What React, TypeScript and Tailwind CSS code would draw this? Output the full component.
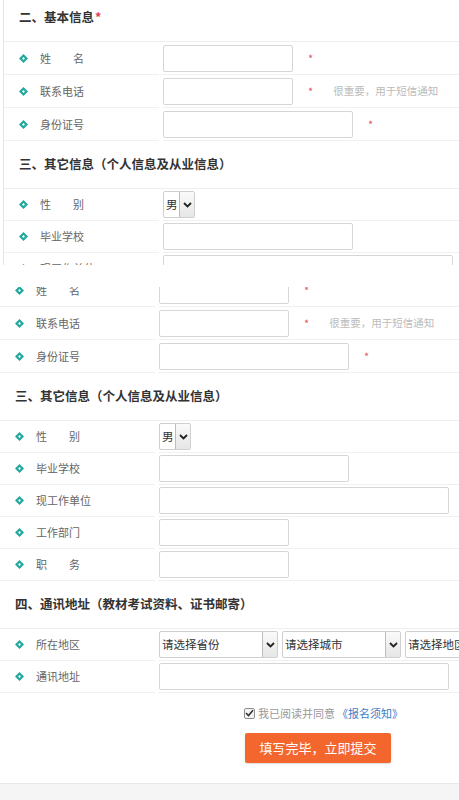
import React from "react";

const Diamond = () => (
  <svg width="9" height="9" viewBox="0 0 10 10" className="shrink-0">
    <path d="M5 0 L10 5 L5 10 L0 5 Z" fill="#22a89c" />
    <path d="M5 3.4 L6.6 5 L5 6.6 L3.4 5 Z" fill="#ffffff" />
  </svg>
);

const Chevron = () => (
  <svg width="9" height="6" viewBox="0 0 9 6">
    <path d="M1 1 L4.5 4.5 L8 1" fill="none" stroke="#222" strokeWidth="1.8" />
  </svg>
);

function Heading({ children }: { children: React.ReactNode }) {
  return (
    <div className="h-[48px] flex items-center pl-[15px] border-b border-[#efefef] text-[12.5px] font-bold text-[#333]">
      {children}
    </div>
  );
}

function Row({
  label,
  tall,
  children,
}: {
  label: string;
  tall?: boolean;
  children?: React.ReactNode;
}) {
  return (
    <div className={tall ? "flex h-[33px]" : "flex h-[32px]"}>
      <div className="w-[155px] shrink-0 flex items-center pl-[15px] border-b border-[#f0f0f0]">
        <Diamond />
        <span className="ml-[12px] text-[11px] text-[#666] whitespace-pre">{label}</span>
      </div>
      <div className="ml-[4px] flex-1 flex items-center border-b border-[#f0f0f0] whitespace-nowrap">
        {children}
      </div>
    </div>
  );
}

function Field({ w }: { w: string }) {
  return <input readOnly className={`h-[27px] ${w} shrink-0 border border-[#d6d6d6] rounded-[2px] bg-white outline-none`} />;
}

const Star = ({ ml }: { ml: string }) => (
  <span className={`${ml} text-[11px] text-[#e0566a] leading-none`}>*</span>
);

function Picker({ text, w }: { text: string; w: string }) {
  return (
    <div className={`h-[27px] ${w} shrink-0 flex items-center justify-between border border-[#cfcfcf] rounded-[2px] bg-white`}>
      <span className="pl-[2px] text-[11.5px] text-[#333]">{text}</span>
      <span className="h-full w-[15px] flex items-center justify-center border-l border-[#bdbdbd] bg-gradient-to-b from-[#fafafa] to-[#e6e6e6]">
        <Chevron />
      </span>
    </div>
  );
}

// the form as a list of blocks, so each screenshot panel can show only its slice
const blocks: React.ReactNode[] = [
  <Heading key="h2">
    二、基本信息<span className="text-[#e0405a] ml-[1px]">*</span>
  </Heading>,
  <Row key="name" label="姓　　名" tall>
    <Field w="w-[130px]" />
    <Star ml="ml-[15px]" />
  </Row>,
  <Row key="phone" label="联系电话" tall>
    <Field w="w-[130px]" />
    <Star ml="ml-[15px]" />
    <span className="ml-[20px] text-[10.5px] text-[#bbb]">很重要，用于短信通知</span>
  </Row>,
  <Row key="id" label="身份证号" tall>
    <Field w="w-[190px]" />
    <Star ml="ml-[15px]" />
  </Row>,
  <Heading key="h3">三、其它信息（个人信息及从业信息）</Heading>,
  <Row key="sex" label="性　　别">
    <Picker text="男" w="w-[32px]" />
  </Row>,
  <Row key="school" label="毕业学校">
    <Field w="w-[190px]" />
  </Row>,
  <Row key="work" label="现工作单位">
    <Field w="w-[290px]" />
  </Row>,
  <Row key="dept" label="工作部门">
    <Field w="w-[130px]" />
  </Row>,
  <Row key="job" label="职　　务">
    <Field w="w-[130px]" />
  </Row>,
  <Heading key="h4">四、通讯地址（教材考试资料、证书邮寄）</Heading>,
  <Row key="area" label="所在地区">
    <div className="flex gap-[4px]">
      <Picker text="请选择省份" w="w-[119px]" />
      <Picker text="请选择城市" w="w-[119px]" />
      <Picker text="请选择地区" w="w-[119px]" />
    </div>
  </Row>,
  <Row key="addr" label="通讯地址">
    <Field w="w-[290px]" />
  </Row>,
];

export default function App() {
  return (
    <div className="w-[459px] h-[800px] overflow-hidden bg-white font-['Noto_Sans_CJK_SC',sans-serif]">
      <div className="h-[265px] overflow-hidden ml-[3px] border-l border-[#e3e3e3]">
        <div className="-mt-[6px]">{blocks.slice(0, 8)}</div>
      </div>

      <div className="pt-[22px]">
        <div className="overflow-hidden">
          <div className="-mt-[13px]">{blocks.slice(1)}</div>
        </div>

        <div className="mt-[14px] pl-[244px] flex items-center h-[12px]">
          <span className="w-[11px] h-[11px] flex items-center justify-center border border-[#8f8f8f] rounded-[2px] bg-[#f4f4f4]">
            <svg width="9" height="8" viewBox="0 0 9 8">
              <path d="M1 4 L3.5 6.5 L8 1.2" fill="none" stroke="#333" strokeWidth="1.6" />
            </svg>
          </span>
          <span className="ml-[3px] text-[11px] text-[#999]">我已阅读并同意</span>
          <span className="ml-[2px] text-[11px] text-[#3d7cc9]">《报名须知》</span>
        </div>

        <button className="mt-[14px] ml-[245px] w-[146px] h-[30px] rounded-[2px] bg-[#f3662d] text-white text-[13px] shadow-[0_1px_2px_rgba(0,0,0,0.15)]">
          填写完毕，立即提交
        </button>

        <div className="mt-[20px] h-[17px] border-t border-[#e8e8e8] bg-[#f5f5f5]" />
      </div>
    </div>
  );
}
